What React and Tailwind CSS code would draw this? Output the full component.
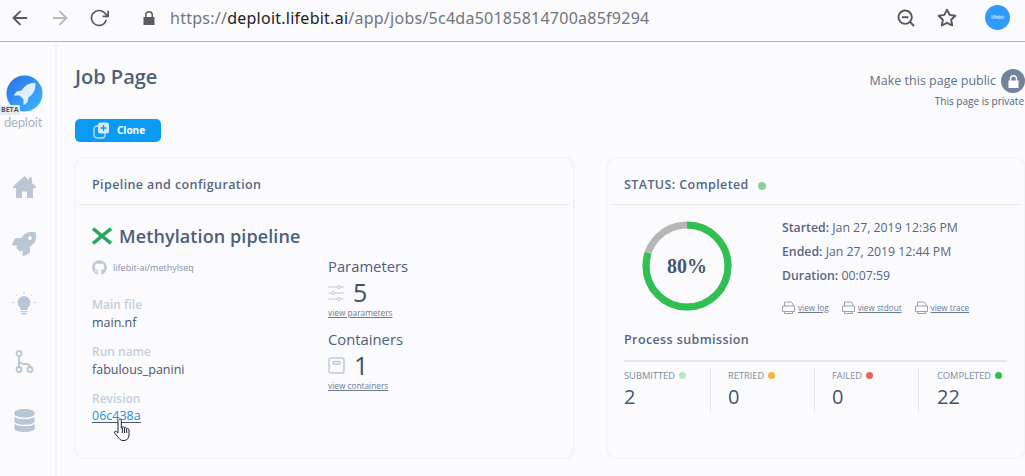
import { FaRocket, FaDatabase, FaGithub } from "react-icons/fa";
import { FiArrowLeft, FiArrowRight, FiRotateCw, FiStar, FiZoomOut } from "react-icons/fi";

const sans = "font-['Open_Sans',sans-serif]";

const stats = [
  { label: "SUBMITTED", value: "2", dot: "bg-[#b5e8c4]", cell: "border-r border-[#dfe6f0]" },
  { label: "RETRIED", value: "0", dot: "bg-[#fbb040]", cell: "pl-[17px] border-r border-[#dfe6f0]" },
  { label: "FAILED", value: "0", dot: "bg-[#e86464]", cell: "pl-[17px] border-r border-[#dfe6f0]" },
  { label: "COMPLETED", value: "22", dot: "bg-[#2fbf4f]", cell: "pl-[18px]" },
];

function Logo() {
  return (
    <div className="relative w-[43px] h-[64px]">
      <svg width="37" height="37" viewBox="0 0 38 38" className="absolute left-[6px] top-0">
        <defs>
          <linearGradient id="logoGrad" x1="0" y1="0" x2="1" y2="1">
            <stop offset="0" stopColor="#2b6fe8" />
            <stop offset="1" stopColor="#3fb8ff" />
          </linearGradient>
        </defs>
        <circle cx="19" cy="19" r="18.5" fill="url(#logoGrad)" />
        <path d="M30 8c-6 0-11 3-14 8l-5 1-3 4 6 0 4 4 0 6 4-3 1-5c5-3 8-8 7-15z" fill="#fff" opacity="0.85" />
      </svg>
      <div className="absolute left-0 top-[30px] h-[10px] w-[20px] bg-[#e8ecf2] text-[7px] leading-[10px] font-bold text-[#4a5a70] pl-[1px]">
        BETA
      </div>
      <div className="absolute left-[4px] top-[38px] text-[13px] leading-[18px] text-[#a9b3bf] font-['Lato',sans-serif] tracking-[-0.2px]">
        deploit
      </div>
    </div>
  );
}

function HomeIcon() {
  return (
    <svg width="23" height="22" viewBox="0 0 23 22" fill="#b9c6d5">
      <path d="M11.500 0L0 10.500V12h3v10h6v-6.500h5V22h6V12h3v-1.500l-4-3.600V1.500h-3v2.800z" />
    </svg>
  );
}

function BulbIcon() {
  return (
    <svg width="24" height="24" viewBox="0 0 24 24" fill="#b9c6d5">
      <circle cx="12" cy="10.500" r="6.500" />
      <path d="M8.500 14h7v4h-7z" />
      <rect x="8.500" y="19" width="7" height="1.300" />
      <rect x="9.500" y="21" width="5" height="1.500" />
      <path d="M12 0v2M3.500 2.500l1.500 1.500M20.500 2.500L19 4M0 10.500h2.500M21.500 10.500H24M3.500 18l1.500-1.500M20.500 18L19 16.500" stroke="#c6d1dd" strokeWidth="1" />
    </svg>
  );
}

function BranchIcon() {
  return (
    <svg width="19" height="23" viewBox="0 0 19 23" fill="none" stroke="#b9c6d5" strokeWidth="1.800">
      <circle cx="4" cy="3.500" r="2.500" />
      <circle cx="4" cy="19.500" r="2.500" />
      <circle cx="15" cy="19.500" r="2.500" />
      <path d="M4 6v11M4 10c0 3 2 4 6 4 3 0 5 .5 5 3" />
    </svg>
  );
}

function SlidersIcon() {
  return (
    <svg width="18" height="18" viewBox="0 0 18 18" fill="none" stroke="#c0ccd9" strokeWidth="1">
      <path d="M0 3h16M0 9h16M0 15h16" />
      <circle cx="11" cy="3" r="1.500" fill="#fbfbfe" />
      <circle cx="5" cy="9" r="1.500" fill="#fbfbfe" />
      <circle cx="11" cy="15" r="1.500" fill="#fbfbfe" />
    </svg>
  );
}

function BoxIcon() {
  return (
    <svg width="18" height="18" viewBox="0 0 18 18" fill="none" stroke="#bccada" strokeWidth="1.500">
      <rect x="1" y="1" width="15" height="15" rx="2" />
      <rect x="5" y="4.500" width="7" height="2.500" rx="1" />
    </svg>
  );
}

function PrinterIcon() {
  return (
    <svg width="13" height="13" viewBox="0 0 13 13" fill="none" stroke="#98a4b3" strokeWidth="1">
      <path d="M2.500 5V1h6.500l2 2v2M.5 5h12v5.500H.5zM2.500 10.500v2h8v-2" />
    </svg>
  );
}

function HandCursor() {
  return (
    <svg width="20" height="24" viewBox="0 0 20 24" className="absolute left-[21px] top-[10px]" fill="#fff" stroke="#1b2430" strokeWidth="1">
      <path d="M6 1.500c1-.8 2.200-.5 2.300 1V10l1-.5V9c.9-.7 2 -.4 2.200.8.900-.7 2-.3 2.200.9 1-.6 2.300-.2 2.300 1.300V17c0 3-2 5.500-5 5.500H10c-2.500 0-3.500-1.500-5-3.500L1.500 15c-.7-1.200.8-2.300 2-1.300L5 15V2.500z" />
      <path d="M9.300 10v5M11.500 10v5M13.700 11v4" />
    </svg>
  );
}

function Ring() {
  const r = 41;
  const c = 2 * Math.PI * r;
  return (
    <div className="relative w-[90px] h-[90px]">
      <svg width="90" height="90" viewBox="0 0 90 90" className="-rotate-90">
        <circle cx="45" cy="45" r={r} fill="none" stroke="#b7b7b7" strokeWidth="7" />
        <circle
          cx="45"
          cy="45"
          r={r}
          fill="none"
          stroke="#2fc052"
          strokeWidth="7"
          strokeDasharray={`${c * 0.8} ${c}`}
        />
      </svg>
      <div className="absolute inset-0 flex items-center justify-center font-['Liberation_Serif',serif] font-bold text-[20px] text-[#46566f]">
        80%
      </div>
    </div>
  );
}

function FileLink({ label }) {
  return (
    <div className="flex items-center gap-[3px]">
      <PrinterIcon />
      <a className="text-[8.200px] leading-[12px] underline text-[#6b7a8f]">{label}</a>
    </div>
  );
}

export default function App() {
  return (
    <div className={`${sans} w-[1025px] h-[476px] overflow-hidden bg-[#fbfbfe] text-[#4a5a73]`}>
      {/* browser bar */}
      <div className="h-[42px] border-b border-[#b5b5b5] flex items-center pb-[6px]">
        <FiArrowLeft className="ml-[9px] text-[#55585c]" size={22} />
        <FiArrowRight className="ml-[18px] text-[#b6b8ba]" size={22} />
        <FiRotateCw className="ml-[18px] text-[#55585c]" size={20} />
        <svg width="12" height="14" viewBox="0 0 12 14" className="ml-[34px]" fill="#5a5d61">
          <path d="M2 6V4a4 4 0 0 1 8 0v2h1.500v8H.5V6zM3.500 6h5V4a2.500 2.500 0 0 0-5 0z" />
        </svg>
        <div className="ml-[15px] font-['Noto_Sans',sans-serif] text-[16px] tracking-[0.25px] text-[#70757a] whitespace-nowrap">
          https://<span className="text-[#202124]">deploit.lifebit.ai</span>/app/jobs/5c4da50185814700a85f9294
        </div>
        <div className="ml-auto flex items-center">
          <FiZoomOut className="text-[#55585c]" size={20} strokeWidth={2.300} />
          <FiStar className="ml-[21px] text-[#55585c]" size={20} strokeWidth={2.300} />
          <div className="ml-[28px] mr-[15px] w-[25px] h-[25px] rounded-full bg-[#2f9bff] flex items-center justify-center text-[5px] text-white">
            lifebit
          </div>
        </div>
      </div>

      <div className="flex h-[434px]">
        {/* sidebar */}
        <div className="w-[57px] mt-[2px] border-r-2 border-[#f0f2f6] flex flex-col items-center pt-[31px] pr-[7px] shrink-0">
          <div className="self-start"><Logo /></div>
          <div className="mt-[37px]"><HomeIcon /></div>
          <FaRocket className="mt-[34px] text-[#b9c6d5]" size={24} />
          <div className="mt-[36px]"><BulbIcon /></div>
          <div className="mt-[34px]"><BranchIcon /></div>
          <FaDatabase className="mt-[36px] text-[#b9c6d5]" size={23} />
        </div>

        <div className="flex-1 pl-[18px] min-w-0">
          {/* page heading */}
          <div className="flex justify-between items-start pt-[20px] h-[77px]">
            <h1 className="text-[20px] leading-[30px] font-semibold text-[#4f5f78]">Job Page</h1>
            <div className="flex flex-col items-end pt-[7px]">
              <div className="flex items-center gap-[5px]">
                <span className="text-[12.500px] leading-[24px] text-[#5f7088]">Make this page public</span>
                <div className="w-[24px] h-[24px] rounded-full bg-[#738399] flex items-center justify-center">
                  <svg width="11" height="13" viewBox="0 0 12 14" fill="#fff">
                    <path d="M2 6V4a4 4 0 0 1 8 0v2h1.500v8H.5V6zM3.500 6h5V4a2.500 2.500 0 0 0-5 0z" />
                  </svg>
                </div>
              </div>
              <span className="text-[10px] leading-[14px] pr-[1px] mt-[1px] text-[#4f5f78]">This page is private</span>
            </div>
          </div>

          <button className="w-[86px] h-[23px] rounded-[5px] bg-[#0a9bf5] text-white text-[10px] font-bold flex items-center pl-[18px] gap-[7px]">
            <svg width="17" height="17" viewBox="0 0 17 17">
              <rect x="1" y="4" width="11" height="12" rx="3" fill="none" stroke="#c8def5" strokeWidth="1.300" />
              <rect x="5" y="0.500" width="11" height="11" rx="2.500" fill="#d8e8f8" />
              <path d="M10.500 3v6M7.500 6h6" stroke="#0a9bf5" strokeWidth="1.300" />
            </svg>
            Clone
          </button>

          <div className="flex gap-[31px] mt-[15px] -ml-[1px]">
            {/* pipeline card */}
            <div className="w-[501px] h-[302px] shrink-0 rounded-[10px] border-2 border-[#f3f5f8] px-[3px]">
              <div className="h-[46px] border-b border-[#e4eaf3] pl-[13px] pt-[8px] flex items-center">
                <h2 className="text-[12.500px] font-semibold tracking-[0.4px] text-[#56667e]">Pipeline and configuration</h2>
              </div>
              <div className="pl-[13px] flex">
                <div className="w-[236px]">
                  <div className="flex items-center gap-[7px] mt-[19px] h-[24px]">
                    <svg width="20" height="18" viewBox="0 0 20 18" fill="none" stroke="#27a85f" strokeWidth="3.500">
                      <path d="M1 1.500l18 15M19 1.500l-18 15" />
                    </svg>
                    <span className="text-[18px] font-semibold tracking-[0.1px] leading-[24px] text-[#4d5e78]">Methylation pipeline</span>
                  </div>
                  <div className="flex items-center gap-[6px] mt-[12px] h-[15px]">
                    <FaGithub className="text-[#bcc8d6]" size={15} />
                    <span className="text-[9px] text-[#8592a3]">lifebit-ai/methylseq</span>
                  </div>
                  <div className="mt-[22px] text-[12px] leading-[16px] font-semibold text-[#c4cfdc]">Main file</div>
                  <div className="mt-[1px] text-[12.500px] leading-[18px] text-[#46566c]">main.nf</div>
                  <div className="mt-[12px] text-[12px] leading-[16px] font-semibold text-[#c4cfdc]">Run name</div>
                  <div className="mt-[1px] text-[12.500px] leading-[18px] text-[#46566c]">fabulous_panini</div>
                  <div className="mt-[12px] text-[12px] leading-[16px] font-semibold text-[#c4cfdc]">Revision</div>
                  <a className="relative block w-fit mt-[1px] text-[12.500px] leading-[13px] pt-[1px] text-[#1d8fe0] border-b border-[#4a5a73]">
                    06c438a
                    <HandCursor />
                  </a>
                </div>
                <div className="pt-[52px]">
                  <div className="text-[14.800px] leading-[18px] font-medium text-[#4d5e78]">Parameters</div>
                  <div className="flex items-center h-[29px] mt-[3px] gap-[7px]">
                    <SlidersIcon />
                    <span className="text-[25px] leading-[29px] font-medium text-[#3f4f68]">5</span>
                  </div>
                  <a className="block text-[8.300px] leading-[11px] underline text-[#6b7a8f]">view parameters</a>
                  <div className="mt-[12px] text-[14.800px] leading-[18px] font-medium text-[#4d5e78]">Containers</div>
                  <div className="flex items-center h-[29px] mt-[3px] gap-[8px]">
                    <BoxIcon />
                    <span className="text-[25px] leading-[29px] font-medium text-[#3f4f68]">1</span>
                  </div>
                  <a className="block text-[8.300px] leading-[11px] underline text-[#6b7a8f]">view containers</a>
                </div>
              </div>
            </div>

            {/* status card */}
            <div className="w-[420px] h-[302px] shrink-0 rounded-[10px] border-2 border-[#f3f5f8] px-[3px]">
              <div className="h-[46px] border-b border-[#e4eaf3] pl-[13px] pt-[8px] flex items-center gap-[9px]">
                <h2 className="text-[12.500px] font-semibold tracking-[0.4px] text-[#56667e]">STATUS: Completed</h2>
                <span className="w-[8px] h-[8px] rounded-full bg-[#8ed09a]" />
              </div>
              <div className="flex pl-[31px] pt-[15px]">
                <div className="pt-[1px]"><Ring /></div>
                <div className="ml-[50px] -mt-[4px] text-[12.300px] leading-[24px] text-[#56667e]">
                  <div><span className="font-semibold">Started:</span> Jan 27, 2019 12:36 PM</div>
                  <div><span className="font-semibold">Ended:</span> Jan 27, 2019 12:44 PM</div>
                  <div><span className="font-semibold">Duration:</span> 00:07:59</div>
                  <div className="flex gap-[13px] mt-[13px]">
                    <FileLink label="view log" />
                    <FileLink label="view stdout" />
                    <FileLink label="view trace" />
                  </div>
                </div>
              </div>
              <div className="ml-[13px] mr-[14px] mt-[17px]">
                <h3 className="text-[12.500px] leading-[18px] font-semibold tracking-[0.4px] text-[#56667e]">Process submission</h3>
                <div className="mt-[11px] border-t-2 border-[#e1e8f4] pt-[7px] grid grid-cols-[87px_104px_104px_auto]">
                  {stats.map((s) => (
                    <div key={s.label} className={s.cell}>
                      <div className="flex items-center gap-[4px] h-[13px]">
                        <span className="text-[9.300px] text-[#7c8a9e]">{s.label}</span>
                        <span className={`w-[7px] h-[7px] -mt-[1px] rounded-full ${s.dot}`} />
                      </div>
                      <div className="text-[20px] leading-[30px] font-medium text-[#46566f]">{s.value}</div>
                    </div>
                  ))}
                </div>
              </div>
            </div>
          </div>
        </div>
      </div>
    </div>
  );
}
